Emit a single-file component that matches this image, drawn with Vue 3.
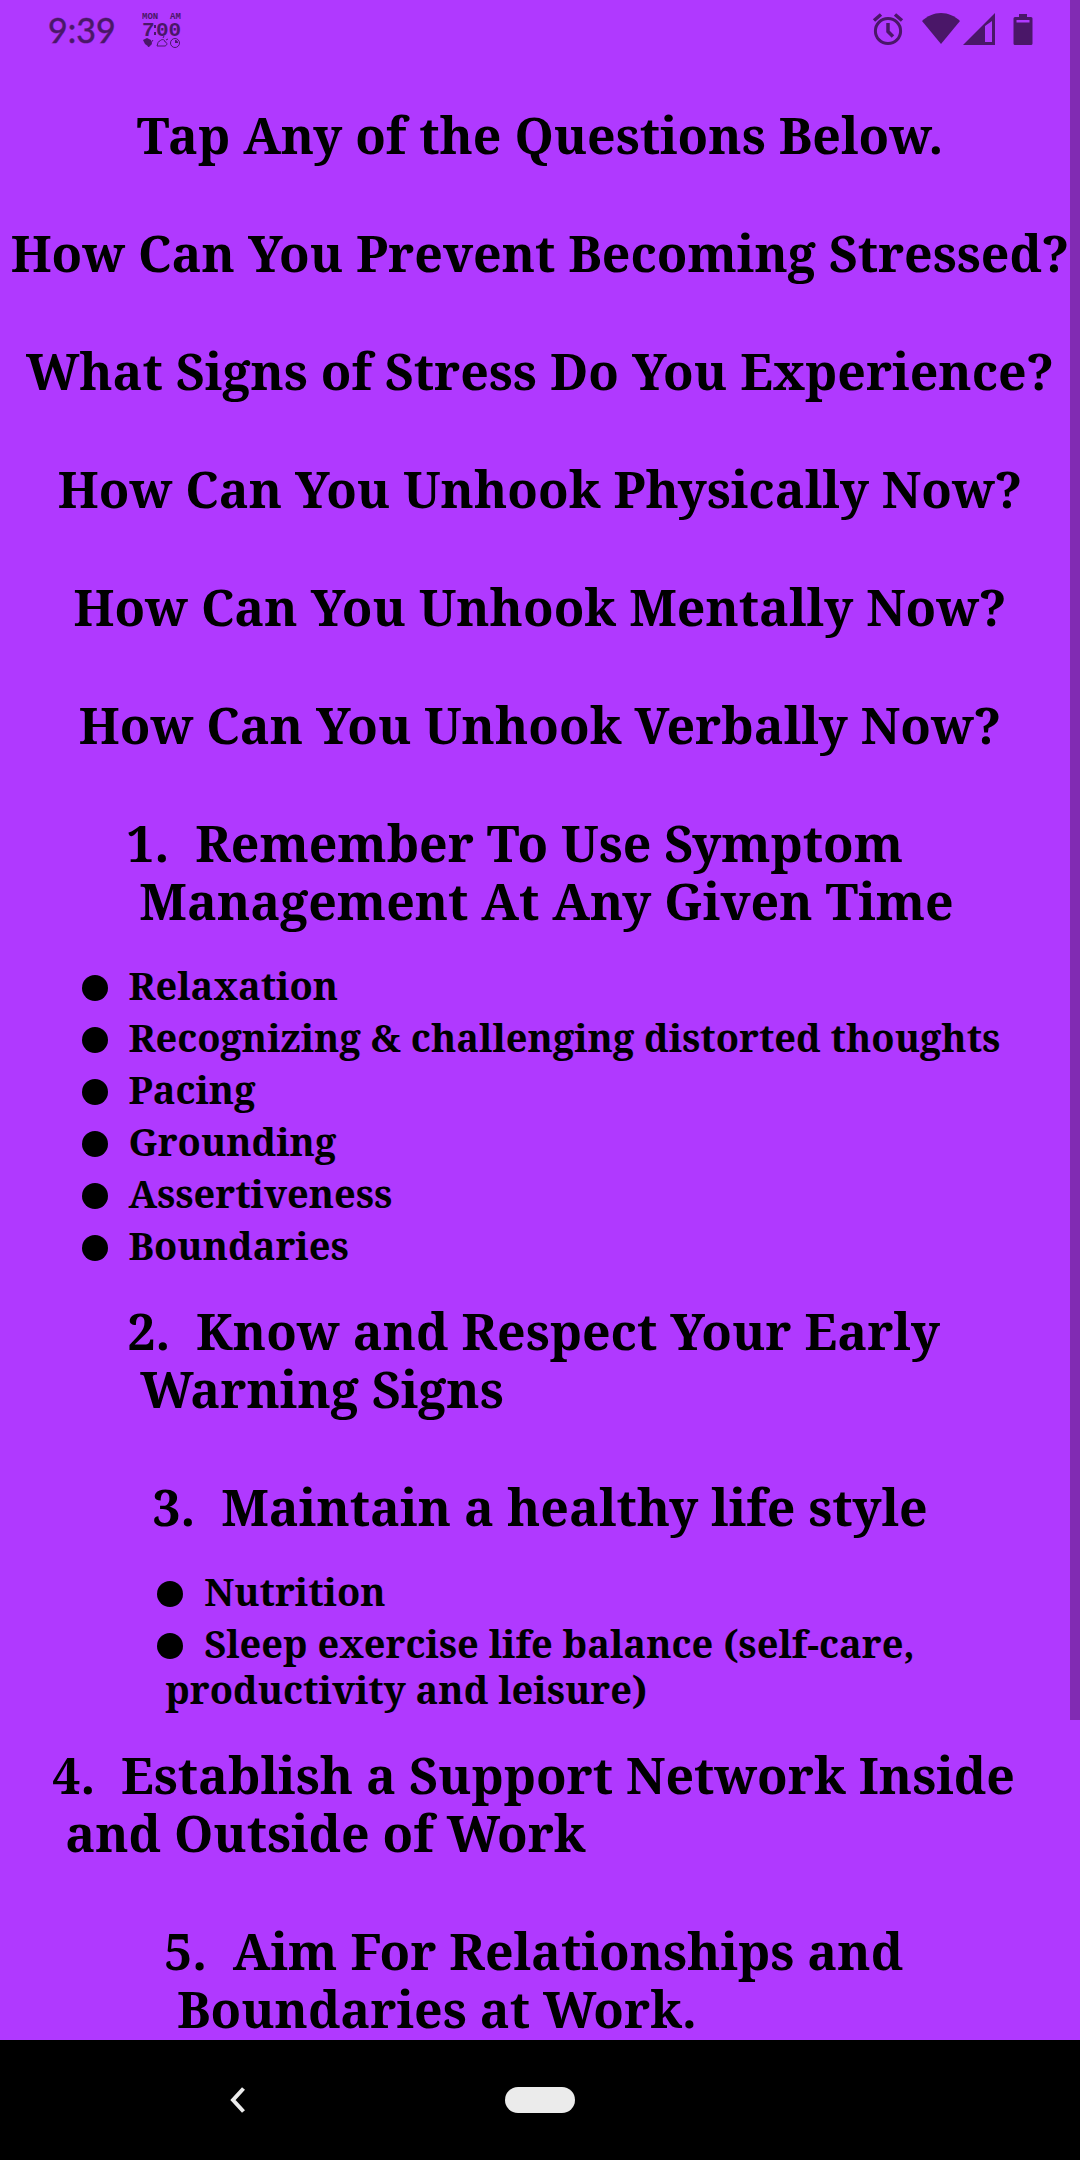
<script setup>
const questions = [
  'How Can You Prevent Becoming Stressed?',
  'What Signs of Stress Do You Experience?',
  'How Can You Unhook Physically Now?',
  'How Can You Unhook Mentally Now?',
  'How Can You Unhook Verbally Now?',
]

const topics = [
  {
    title: '1.  Remember To Use Symptom \n Management At Any Given Time',
    items: [
      'Relaxation',
      'Recognizing & challenging distorted thoughts',
      'Pacing',
      'Grounding',
      'Assertiveness',
      'Boundaries',
    ],
  },
  { title: '2.  Know and Respect Your Early \n Warning Signs', items: [] },
  {
    title: '3.  Maintain a healthy life style',
    items: ['Nutrition', 'Sleep exercise life balance (self-care, \n productivity and leisure)'],
  },
  { title: '4.  Establish a Support Network Inside \n and Outside of Work', items: [] },
  { title: '5.  Aim For Relationships and \n Boundaries at Work.', items: [] },
]
</script>

<template>
  <div class="screen">
    <div class="page">
      <header class="status">
        <time class="clock">9:39</time>
        <svg class="widget" width="40" height="38" viewBox="0 0 40 38" aria-hidden="true">
          <g fill="currentColor" font-family="Liberation Mono, monospace" font-weight="700">
            <text x="0" y="8" font-size="9">MON</text>
            <text x="28" y="8" font-size="9">AM</text>
            <text x="0" y="25" font-size="21">7</text>
            <text x="14" y="25" font-size="21">00</text>
            <rect x="12" y="14" width="2" height="3" />
            <rect x="12" y="21" width="2" height="3" />
            <path d="M1 29l4-2 4 2 1 4-3 3-4-3z" />
          </g>
          <g fill="none" stroke="currentColor" stroke-width="1">
            <path d="M6 36l5-7M15 35h8c3-1 2-4 0-4 0-3-4-3-5-1-2 0-2 2-3 5zM21 27l1-2M24 29l2-1" />
            <circle cx="33" cy="32" r="4.5" />
          </g>
          <path d="M33 29v3h3a3 3 0 0 0-3-3z" fill="currentColor" />
        </svg>
        <div class="indicators">
          <svg width="32" height="34" viewBox="0 0 32 34" aria-hidden="true">
            <circle cx="16" cy="18" r="12.6" fill="none" stroke="currentColor" stroke-width="3" />
            <path d="M2 7.5L9 1.5M30 7.5L23 1.5M16 10v8.5l5 5" fill="none" stroke="currentColor" stroke-width="3.5" />
          </svg>
          <svg class="wifi" width="38" height="34" viewBox="0 0 38 34" aria-hidden="true">
            <path d="M19 31L0 8C5 3 12 0 19 0s14 3 19 8z" fill="currentColor" />
          </svg>
          <svg class="signal" width="32" height="34" viewBox="0 0 32 34" aria-hidden="true">
            <path fill-rule="evenodd" d="M0 32L32 0v32zM22 13v16h7V8z" fill="currentColor" />
          </svg>
          <svg class="battery" width="20" height="34" viewBox="0 0 20 34" aria-hidden="true">
            <path fill-rule="evenodd" d="M6 1h8v3h4a1.5 1.5 0 0 1 1.5 1.500v25A1.5 1.5 0 0 1 18 32H2A1.5 1.5 0 0 1 .5 30.500v-25A1.5 1.5 0 0 1 2 4h4zM3.500 7v2.500h13V7z" fill="currentColor" />
          </svg>
        </div>
      </header>

      <main class="content">
        <h1 class="line">Tap Any of the Questions Below.</h1>
        <button v-for="q in questions" :key="q" class="line" type="button">{{ q }}</button>
        <template v-for="t in topics" :key="t.title">
          <h2 class="line" :class="{ lead: t.items.length }">{{ t.title }}</h2>
          <ul v-if="t.items.length" class="list">
            <li v-for="item in t.items" :key="item"><span class="dot"></span>{{ '  ' + item }}</li>
          </ul>
        </template>
      </main>
      <div class="scroll"></div>
    </div>

    <nav class="nav">
      <button class="back" type="button" aria-label="Back">
        <svg width="16" height="26" viewBox="0 0 16 26" aria-hidden="true">
          <path d="M13.500 1.500L3 13l10.500 11.500" fill="none" stroke="#ebebeb" stroke-width="4" />
        </svg>
      </button>
      <button class="home" type="button" aria-label="Home"></button>
    </nav>
  </div>
</template>

<style>
body {
  margin: 0;
}
</style>

<style scoped>
.screen {
  display: flex;
  flex-direction: column;
  min-height: 100vh;
  color: #000;
  font-family: "Noto Serif", "Noto Sans", serif;
}
.page {
  position: relative;
  flex: 1;
  background: #b039ff;
}
.status {
  display: flex;
  align-items: center;
  height: 60px;
  padding: 0 47px 0 48px;
  color: #4a1768;
}
.clock {
  font: 34px/40px Lato, sans-serif;
  -webkit-text-stroke: 1px rgb(74 23 104 / 50%);
}
.widget {
  margin-left: 26px;
}
.indicators {
  display: flex;
  margin-left: auto;
}
.wifi {
  margin-left: 18px;
}
.signal {
  margin-left: 3px;
}
.battery {
  margin-left: 18px;
}
.content {
  display: flex;
  flex-direction: column;
  align-items: center;
  padding-top: 46px;
}
.line {
  margin: 0 0 60px;
  padding: 0;
  border: 0;
  background: none;
  color: inherit;
  font: 700 50px/58px "Noto Serif", "Noto Sans", serif;
  white-space: pre;
}
.line:last-child {
  margin-bottom: 2px;
}
.lead {
  margin-bottom: 32px;
}
.list {
  margin: 0 0 34px;
  padding: 0;
  list-style: none;
  font-size: 38px;
  font-weight: 700;
  line-height: 46px;
  white-space: pre;
}
.list li + li {
  margin-top: 6px;
}
.dot {
  display: inline-block;
  width: 26px;
  height: 26px;
  margin: 0 1px 0 2px;
  border-radius: 50%;
  background: currentColor;
  vertical-align: -1px;
}
.scroll {
  position: absolute;
  top: 0;
  right: 0;
  width: 10px;
  height: 84.3%;
  background: #812bb3;
}
.nav {
  display: grid;
  grid-template-columns: 1fr 70px 1fr;
  align-items: center;
  height: 120px;
  background: #000;
}
.nav button {
  padding: 0;
  border: 0;
}
.back {
  display: flex;
  justify-self: center;
  margin-right: 30px;
  background: none;
}
.home {
  grid-column: 2;
  height: 26px;
  border-radius: 13px;
  background: #ebebeb;
}
</style>
